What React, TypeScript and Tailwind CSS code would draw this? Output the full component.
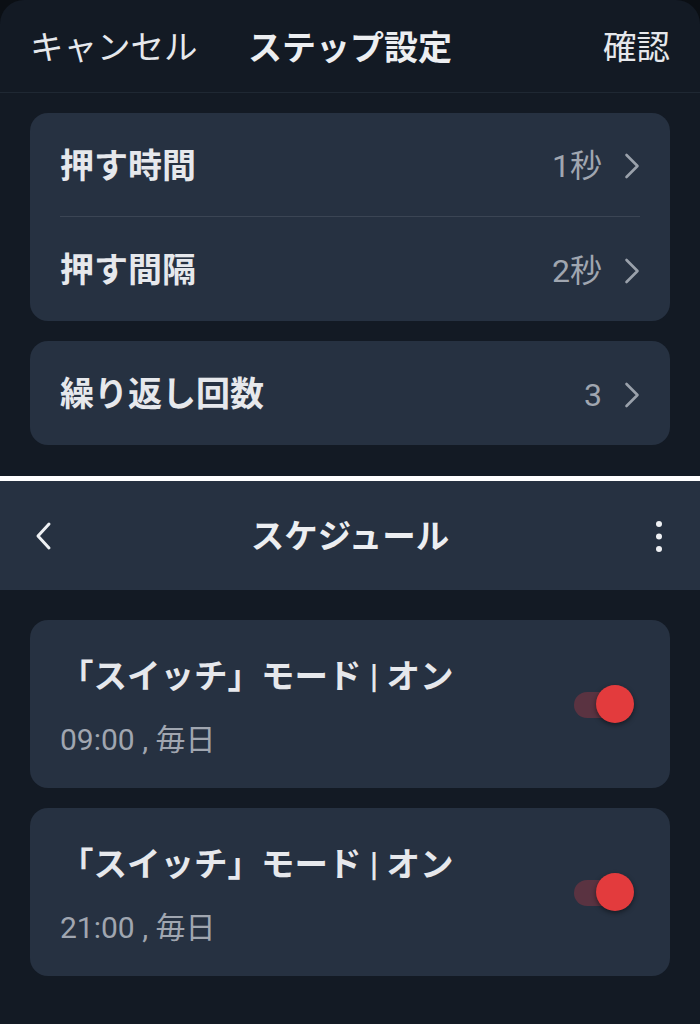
import { ReactNode } from "react";

const font = { fontFamily: "Roboto, 'Noto Sans CJK JP', sans-serif" };

function Chevron() {
  return (
    <svg width="16" height="26" viewBox="0 0 16 26" fill="none" className="shrink-0">
      <path d="M2.5 2 L13.5 13 L2.5 24" stroke="#9aa1ab" strokeWidth="2.6" strokeLinecap="round" strokeLinejoin="round" />
    </svg>
  );
}

function SettingRow({ label, value, last }: { label: string; value: string; last?: boolean }) {
  return (
    <div className="flex h-[104px] flex-col px-[30px]">
      <div className="flex flex-1 items-center pt-[3px]">
        <span className="text-[34px] font-bold text-[#e6e8ec]">{label}</span>
        <span className="ml-auto text-[32px] text-[#a0a6b0]">{value}</span>
        <span className="ml-[22px]">
          <Chevron />
        </span>
      </div>
      {!last ? <div className="h-px bg-[#3b4554]" /> : null}
    </div>
  );
}

function Card({ children }: { children: ReactNode }) {
  return <div className="rounded-[18px] bg-[#263141]">{children}</div>;
}

function Toggle() {
  return (
    <div className="relative h-[38px] w-[60px]">
      <div className="absolute left-0 top-[7px] h-[26px] w-[50px] rounded-full bg-[#5a3341]" />
      <div className="absolute right-0 top-0 h-[38px] w-[38px] rounded-full bg-[#e33b3d] shadow-[0_2px_5px_rgba(0,0,0,0.45)]" />
    </div>
  );
}

function ScheduleCard({ time }: { time: string }) {
  return (
    <div className="flex h-[168px] items-center rounded-[18px] bg-[#263141] pl-[30px] pr-[36px]">
      <div className="flex flex-col pt-[6px]">
        <span className="text-[33.5px] font-bold leading-[40px] text-[#e6e8ec]">「スイッチ」モード | オン</span>
        <span className="mt-[25px] text-[30px] leading-[36px] text-[#a0a6b0]">{time} , 毎日</span>
      </div>
      <div className="ml-auto">
        <Toggle />
      </div>
    </div>
  );
}

export default function App() {
  return (
    <div className="flex h-[1024px] w-[700px] flex-col overflow-hidden bg-[#0b0f14]" style={font}>
      <div className="flex h-[476px] flex-col rounded-t-[24px] bg-[#131a24]">
        <div className="grid h-[93px] grid-cols-[1fr_auto_1fr] items-center border-b border-[#1f2833] px-[30px] pt-[4px]">
          <span className="text-[33.5px] text-[#e6e8ec]">キャンセル</span>
          <span className="text-[34px] font-bold text-[#eceef1]">ステップ設定</span>
          <span className="text-right text-[33.5px] text-[#e6e8ec]">確認</span>
        </div>
        <div className="flex flex-col gap-[20px] px-[30px] pt-[20px]">
          <Card>
            <SettingRow label="押す時間" value="1秒" />
            <SettingRow label="押す間隔" value="2秒" last />
          </Card>
          <Card>
            <SettingRow label="繰り返し回数" value="3" last />
          </Card>
        </div>
      </div>
      <div className="h-[5px] bg-white" />
      <div className="flex h-[109px] items-center justify-between bg-[#263141] pl-[34px] pr-[34px] pt-[4px]">
        <svg width="20" height="32" viewBox="0 0 20 32" fill="none" className="-mt-[4px]">
          <path d="M15 4 L4 16 L15 28" stroke="#eef0f3" strokeWidth="3" strokeLinecap="round" strokeLinejoin="round" />
        </svg>
        <span className="text-[33.5px] font-bold text-[#eceef1]">スケジュール</span>
        <svg width="20" height="32" viewBox="0 0 20 32" fill="#eef0f3" className="-mt-[4px]">
          <circle cx="13" cy="4" r="3" />
          <circle cx="13" cy="16.5" r="3" />
          <circle cx="13" cy="29" r="3" />
        </svg>
      </div>
      <div className="flex flex-1 flex-col gap-[20px] bg-[#131a24] px-[30px] pt-[30px]">
        <ScheduleCard time="09:00" />
        <ScheduleCard time="21:00" />
      </div>
    </div>
  );
}
